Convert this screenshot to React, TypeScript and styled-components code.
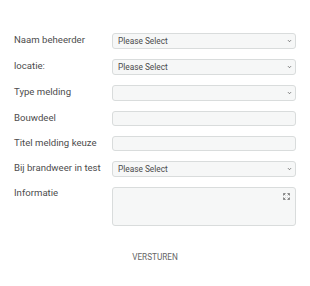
import React from 'react';
import styled, {createGlobalStyle} from 'styled-components';

const GlobalStyle = createGlobalStyle`
  html, body {
    margin: 0;
    padding: 0;
    background: #ffffff;
  }
  body {
    font-family: Roboto, "Liberation Sans", Arial, sans-serif;
  }
`;

type Field = {
  label: string;
  kind: 'select' | 'input';
  placeholder?: string;
};

const fields: Field[] = [
  {label: 'Naam beheerder', kind: 'select', placeholder: 'Please Select'},
  {label: 'locatie:', kind: 'select', placeholder: 'Please Select'},
  {label: 'Type melding', kind: 'select'},
  {label: 'Bouwdeel', kind: 'input'},
  {label: 'Titel melding keuze', kind: 'input'},
  {label: 'Bij brandweer in test', kind: 'select', placeholder: 'Please Select'},
];

const Chevron = () => (
  <ChevronIcon width="5" height="4" viewBox="0 0 5 4">
    <path d="M1 1.2 L2.5 2.7 L4 1.2" fill="none" stroke="#666" strokeWidth="0.9" />
  </ChevronIcon>
);

const ExpandIcon = () => (
  <ExpandSvg width="7" height="7" viewBox="0 0 8 8">
    <path
      d="M0.5 3 V0.5 H3 M1 1 L2.6 2.6 M5 0.5 H7.5 V3 M7 1 L5.4 2.6 M0.5 5 V7.5 H3 M1 7 L2.6 5.4 M5 7.5 H7.5 V5 M7 7 L5.4 5.4"
      fill="none"
      stroke="#777"
      strokeWidth="1"
    />
  </ExpandSvg>
);

export default function App() {
  return (
    <>
      <GlobalStyle />
      <Page>
        <Form>
          {fields.map(({label, kind, placeholder}) => (
            <Row key={label}>
              <Label>{label}</Label>
              {kind === 'select' ? (
                <SelectBox>
                  <SelectText>{placeholder ?? ''}</SelectText>
                  <Chevron />
                </SelectBox>
              ) : (
                <InputBox />
              )}
            </Row>
          ))}
          <Row top>
            <Label top>Informatie</Label>
            <TextArea>
              <ExpandIcon />
            </TextArea>
          </Row>
        </Form>
        <Footer>
          <SubmitButton>VERSTUREN</SubmitButton>
        </Footer>
      </Page>
    </>
  );
}

const Page = styled.div`
  width: 310px;
  height: 286px;
  box-sizing: border-box;
  padding: 33px 14px 0 14px;
`;

const Form = styled.div`
  display: flex;
  flex-direction: column;
  gap: 10.4px;
`;

const Row = styled.div<{top?: boolean}>`
  display: grid;
  grid-template-columns: 98px 184px;
  align-items: ${p => (p.top ? 'start' : 'center')};
`;

const Label = styled.div<{top?: boolean}>`
  font-size: 9.6px;
  color: #4d4d4d;
  line-height: 12px;
  padding-top: ${p => (p.top ? '1px' : '0')};
  margin-top: -1px;
  white-space: nowrap;
`;

const fieldBase = `
  box-sizing: border-box;
  background: #f6f7f7;
  border: 1px solid #d9dcdc;
  border-radius: 3px;
`;

const SelectBox = styled.div`
  ${fieldBase}
  height: 15.6px;
  display: flex;
  align-items: center;
  justify-content: space-between;
  padding: 0 3px 0 5px;
`;

const SelectText = styled.span`
  font-size: 8.3px;
  color: #4a4a4a;
`;

const ChevronIcon = styled.svg`
  display: block;
`;

const InputBox = styled.div`
  ${fieldBase}
  height: 14.6px;
`;

const TextArea = styled.div`
  ${fieldBase}
  height: 38.6px;
  display: flex;
  justify-content: flex-end;
  align-items: flex-start;
  padding: 5px 5px 0 0;
`;

const ExpandSvg = styled.svg`
  display: block;
`;

const Footer = styled.div`
  display: flex;
  justify-content: center;
  padding-top: 26px;
`;

const SubmitButton = styled.div`
  font-size: 8.2px;
  color: #666;
  line-height: 10px;
`;
